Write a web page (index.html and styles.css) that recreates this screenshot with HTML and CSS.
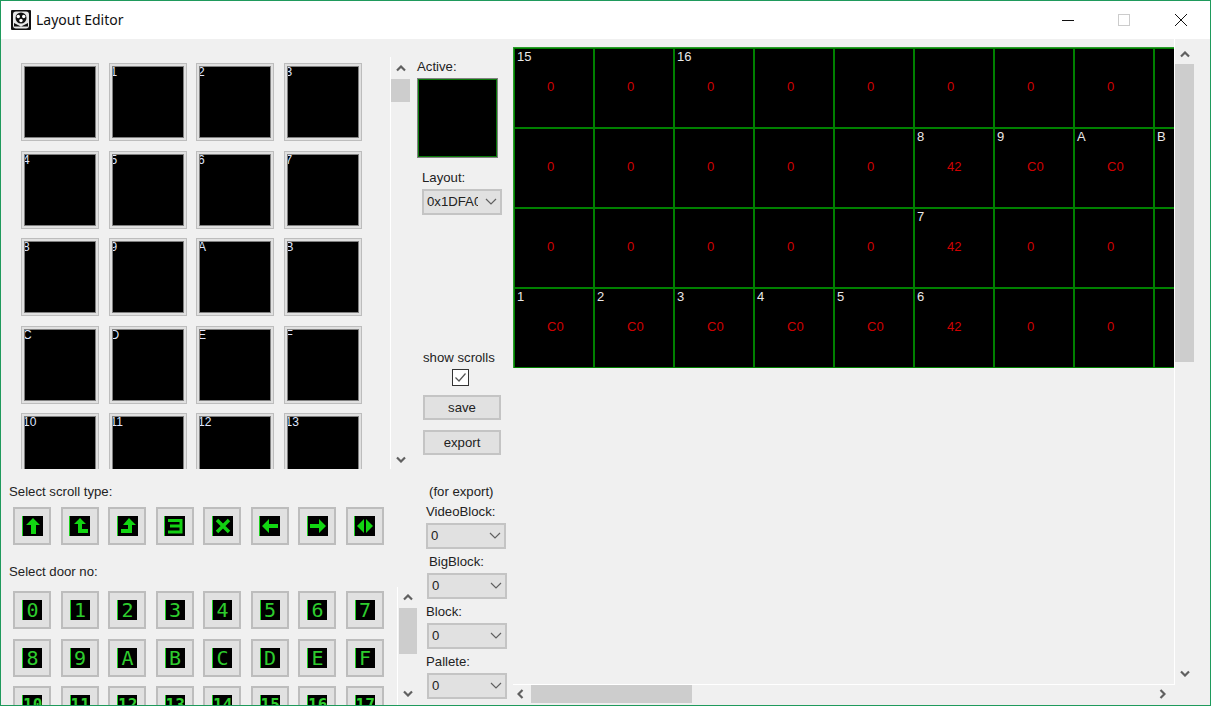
FILE: index.html
```html
<!DOCTYPE html>
<html lang="en">
<head>
  <meta charset="UTF-8">
  <title>Layout Editor</title>
  <link rel="stylesheet" href="styles.css">
</head>
<body>

  <svg class="defs" width="0" height="0">
    <symbol id="up" viewBox="0 0 10 7"><polyline points="1,5.5 5,1.5 9,5.5" fill="none" stroke="#606060" stroke-width="2.2"/></symbol>
    <symbol id="down" viewBox="0 0 10 7"><polyline points="1,1.5 5,5.5 9,1.5" fill="none" stroke="#606060" stroke-width="2.2"/></symbol>
    <symbol id="left" viewBox="0 0 7 10"><polyline points="5.5,1 1.5,5 5.5,9" fill="none" stroke="#606060" stroke-width="2.2"/></symbol>
    <symbol id="right" viewBox="0 0 7 10"><polyline points="1.5,1 5.5,5 1.5,9" fill="none" stroke="#606060" stroke-width="2.2"/></symbol>
    <symbol id="caret" viewBox="0 0 12 7"><polyline points="1,1 6,6 11,1" fill="none" stroke="#606060" stroke-width="1.2"/></symbol>
  </svg>

  <div class="window">

    <div class="titlebar">
      <svg class="app-icon" viewBox="0 0 20 20">
        <rect width="20" height="20" rx="1" fill="#111"/>
        <rect x="2" y="1.5" width="16" height="17" rx="3" fill="#e8e8e8"/>
        <circle cx="10" cy="8" r="5.5" fill="#111"/>
        <circle cx="7.3" cy="6.5" r="1.7" fill="#fff"/>
        <circle cx="12.7" cy="6.5" r="1.7" fill="#fff"/>
        <circle cx="10" cy="10.5" r="1.7" fill="#fff"/>
        <path d="M3 13l7 3.5 7-3.5v3.5H3z" fill="#111"/>
      </svg>
      <span class="title">Layout Editor</span>
      <div class="win-buttons">
        <span class="win-min"></span>
        <span class="win-max"></span>
        <svg class="win-close" viewBox="0 0 12 12"><path d="M0 0L12 12M12 0L0 12" stroke="#111" stroke-width="1" fill="none"/></svg>
      </div>
    </div>

    <div class="content">

      <div class="left-col">
        <div class="tile-panel">
          <div class="tile-grid">
            <div class="tile"><div class="tile-face"></div></div>
            <div class="tile"><div class="tile-face">1</div></div>
            <div class="tile"><div class="tile-face">2</div></div>
            <div class="tile"><div class="tile-face">3</div></div>
            <div class="tile"><div class="tile-face">4</div></div>
            <div class="tile"><div class="tile-face">5</div></div>
            <div class="tile"><div class="tile-face">6</div></div>
            <div class="tile"><div class="tile-face">7</div></div>
            <div class="tile"><div class="tile-face">8</div></div>
            <div class="tile"><div class="tile-face">9</div></div>
            <div class="tile"><div class="tile-face">A</div></div>
            <div class="tile"><div class="tile-face">B</div></div>
            <div class="tile"><div class="tile-face">C</div></div>
            <div class="tile"><div class="tile-face">D</div></div>
            <div class="tile"><div class="tile-face">E</div></div>
            <div class="tile"><div class="tile-face">F</div></div>
            <div class="tile"><div class="tile-face">10</div></div>
            <div class="tile"><div class="tile-face">11</div></div>
            <div class="tile"><div class="tile-face">12</div></div>
            <div class="tile"><div class="tile-face">13</div></div>
          </div>
          <div class="vscroll tile-scroll">
            <div class="arrow arrow-tall"><svg class="chev"><use href="#up"/></svg></div>
            <div class="thumb thumb-tiles"></div>
            <div class="arrow arrow-end"><svg class="chev"><use href="#down"/></svg></div>
          </div>
        </div>

        <div class="label scroll-label">Select scroll type:</div>
        <div class="btn-row">
          <div class="pick"><svg class="pick-img" viewBox="0 0 20 20"><polygon points="10,2 17,9 13,9 13,18 8,18 8,9 3,9"/></svg></div>
          <div class="pick"><svg class="pick-img" viewBox="0 0 20 20"><polygon points="10,2 16,8 12,8 12,13 18,13 18,17 8,17 8,8 4,8"/></svg></div>
          <div class="pick"><svg class="pick-img" viewBox="0 0 20 20"><polygon points="11,2 18,9 14,9 14,17 3,17 3,13 10,13 10,9 5,9"/></svg></div>
          <div class="pick"><svg class="pick-img" viewBox="0 0 20 20"><path class="line" d="M3 4.5H16V16H3M5 10H16"/></svg></div>
          <div class="pick"><svg class="pick-img" viewBox="0 0 20 20"><path class="line line-x" d="M4 4L16 16M16 4L4 16"/></svg></div>
          <div class="pick"><svg class="pick-img" viewBox="0 0 20 20"><polygon points="2,10 9,3 9,8 18,8 18,12 9,12 9,17"/></svg></div>
          <div class="pick"><svg class="pick-img" viewBox="0 0 20 20"><polygon points="18,10 11,3 11,8 2,8 2,12 11,12 11,17"/></svg></div>
          <div class="pick"><svg class="pick-img" viewBox="0 0 20 20"><polygon points="2,10 9,3 9,17"/><polygon points="18,10 11,3 11,17"/></svg></div>
        </div>

        <div class="label door-label">Select door no:</div>
        <div class="door-panel">
          <div class="door-grid">
            <div class="pick"><span class="pick-num">0</span></div>
            <div class="pick"><span class="pick-num">1</span></div>
            <div class="pick"><span class="pick-num">2</span></div>
            <div class="pick"><span class="pick-num">3</span></div>
            <div class="pick"><span class="pick-num">4</span></div>
            <div class="pick"><span class="pick-num">5</span></div>
            <div class="pick"><span class="pick-num">6</span></div>
            <div class="pick"><span class="pick-num">7</span></div>
            <div class="pick"><span class="pick-num">8</span></div>
            <div class="pick"><span class="pick-num">9</span></div>
            <div class="pick"><span class="pick-num">A</span></div>
            <div class="pick"><span class="pick-num">B</span></div>
            <div class="pick"><span class="pick-num">C</span></div>
            <div class="pick"><span class="pick-num">D</span></div>
            <div class="pick"><span class="pick-num">E</span></div>
            <div class="pick"><span class="pick-num">F</span></div>
            <div class="pick"><span class="pick-num pick-num-wide">10</span></div>
            <div class="pick"><span class="pick-num pick-num-wide">11</span></div>
            <div class="pick"><span class="pick-num pick-num-wide">12</span></div>
            <div class="pick"><span class="pick-num pick-num-wide">13</span></div>
            <div class="pick"><span class="pick-num pick-num-wide">14</span></div>
            <div class="pick"><span class="pick-num pick-num-wide">15</span></div>
            <div class="pick"><span class="pick-num pick-num-wide">16</span></div>
            <div class="pick"><span class="pick-num pick-num-wide">17</span></div>
          </div>
          <div class="vscroll door-scroll">
            <div class="arrow arrow-door"><svg class="chev"><use href="#up"/></svg></div>
            <div class="thumb thumb-door"></div>
            <div class="arrow arrow-end"><svg class="chev"><use href="#down"/></svg></div>
          </div>
        </div>
      </div>

      <div class="mid-col">
        <div class="label active-label">Active:</div>
        <div class="active-box"></div>
        <div class="label layout-label">Layout:</div>
        <div class="combo layout-combo"><span class="combo-text">0x1DFA00</span><svg class="caret"><use href="#caret"/></svg></div>
        <div class="label show-label">show scrolls</div>
        <div class="check">
          <svg viewBox="0 0 15 15"><polyline points="2.5,7.5 6,11 12.5,3.5" fill="none" stroke="#555" stroke-width="1.2"/></svg>
        </div>
        <div class="btn save-btn">save</div>
        <div class="btn export-btn">export</div>
        <div class="label note-label">(for export)</div>
        <div class="label video-label">VideoBlock:</div>
        <div class="combo video-combo"><span class="combo-text">0</span><svg class="caret"><use href="#caret"/></svg></div>
        <div class="label big-label">BigBlock:</div>
        <div class="combo plain-combo"><span class="combo-text">0</span><svg class="caret"><use href="#caret"/></svg></div>
        <div class="label block-label">Block:</div>
        <div class="combo plain-combo"><span class="combo-text">0</span><svg class="caret"><use href="#caret"/></svg></div>
        <div class="label block-label">Pallete:</div>
        <div class="combo plain-combo"><span class="combo-text">0</span><svg class="caret"><use href="#caret"/></svg></div>
      </div>

      <div class="right-col">
        <div class="map-view">
          <div class="map-grid">
            <div class="cell"><span class="cell-id">15</span><span class="cell-val">0</span></div>
            <div class="cell"><span class="cell-val">0</span></div>
            <div class="cell"><span class="cell-id">16</span><span class="cell-val">0</span></div>
            <div class="cell"><span class="cell-val">0</span></div>
            <div class="cell"><span class="cell-val">0</span></div>
            <div class="cell"><span class="cell-val">0</span></div>
            <div class="cell"><span class="cell-val">0</span></div>
            <div class="cell"><span class="cell-val">0</span></div>
            <div class="cell"></div>

            <div class="cell"><span class="cell-val">0</span></div>
            <div class="cell"><span class="cell-val">0</span></div>
            <div class="cell"><span class="cell-val">0</span></div>
            <div class="cell"><span class="cell-val">0</span></div>
            <div class="cell"><span class="cell-val">0</span></div>
            <div class="cell"><span class="cell-id">8</span><span class="cell-val">42</span></div>
            <div class="cell"><span class="cell-id">9</span><span class="cell-val">C0</span></div>
            <div class="cell"><span class="cell-id">A</span><span class="cell-val">C0</span></div>
            <div class="cell"><span class="cell-id">B</span></div>

            <div class="cell"><span class="cell-val">0</span></div>
            <div class="cell"><span class="cell-val">0</span></div>
            <div class="cell"><span class="cell-val">0</span></div>
            <div class="cell"><span class="cell-val">0</span></div>
            <div class="cell"><span class="cell-val">0</span></div>
            <div class="cell"><span class="cell-id">7</span><span class="cell-val">42</span></div>
            <div class="cell"><span class="cell-val">0</span></div>
            <div class="cell"><span class="cell-val">0</span></div>
            <div class="cell"></div>

            <div class="cell"><span class="cell-id">1</span><span class="cell-val">C0</span></div>
            <div class="cell"><span class="cell-id">2</span><span class="cell-val">C0</span></div>
            <div class="cell"><span class="cell-id">3</span><span class="cell-val">C0</span></div>
            <div class="cell"><span class="cell-id">4</span><span class="cell-val">C0</span></div>
            <div class="cell"><span class="cell-id">5</span><span class="cell-val">C0</span></div>
            <div class="cell"><span class="cell-id">6</span><span class="cell-val">42</span></div>
            <div class="cell"><span class="cell-val">0</span></div>
            <div class="cell"><span class="cell-val">0</span></div>
            <div class="cell"></div>
          </div>
        </div>
        <div class="vscroll map-vscroll">
          <div class="arrow arrow-map"><svg class="chev"><use href="#up"/></svg></div>
          <div class="thumb thumb-map"></div>
          <div class="arrow arrow-end"><svg class="chev"><use href="#down"/></svg></div>
        </div>
        <div class="hscroll">
          <div class="arrow-h"><svg class="chev-h"><use href="#left"/></svg></div>
          <div class="thumb thumb-h"></div>
          <div class="arrow-h arrow-h-end"><svg class="chev-h"><use href="#right"/></svg></div>
        </div>
      </div>

    </div>
  </div>

</body>
</html>
```

FILE: styles.css
```css
body {
  margin: 0;
  font-family: "Liberation Sans", Arial, sans-serif;
  font-size: 13.2px;
  color: #222;
}

.defs {
  position: absolute;
}

.window {
  box-sizing: border-box;
  width: 1211px;
  height: 706px;
  border: 1px solid #1f9a5c;
  display: flex;
  flex-direction: column;
  overflow: hidden;
  background-color: #f0f0f0;
}

/* title bar */
.titlebar {
  flex: none;
  height: 38px;
  background-color: #fff;
  display: flex;
  align-items: center;
}

.app-icon {
  width: 20px;
  height: 20px;
  margin-left: 10px;
}

.title {
  margin: 0 0 2px 5px;
  font-family: "Noto Sans", sans-serif;
  font-size: 14px;
  color: #111;
}

.win-buttons {
  margin-left: auto;
  display: flex;
  align-items: center;
}

.win-min {
  width: 12px;
  height: 1px;
  background-color: #111;
  margin-right: 44px;
}

.win-max {
  box-sizing: border-box;
  width: 12px;
  height: 12px;
  border: 1px solid #ccc;
  margin-right: 45px;
}

.win-close {
  width: 12px;
  height: 12px;
  margin-right: 23px;
}

.content {
  flex: 1;
  display: flex;
  min-height: 0;
}

/* left column */
.left-col {
  flex: none;
  width: 416px;
  display: flex;
  flex-direction: column;
}

.label {
  height: 14px;
  line-height: 16px;
  white-space: nowrap;
}

.tile-panel {
  flex: none;
  height: 412px;
  margin-top: 18px;
  display: flex;
  overflow: hidden;
}

.tile-grid {
  box-sizing: border-box;
  width: 389px;
  height: 412px;
  padding: 6px 0 0 20px;
  display: grid;
  grid-template-columns: repeat(4, 78px);
  grid-auto-rows: 78px;
  gap: 9.5px;
  overflow: hidden;
}

.tile {
  box-sizing: border-box;
  border: 1px solid #bdbdbd;
  background-color: #e0e0e0;
  padding: 2px;
}

/* the ids start under the frame, so their left edge is cut */
.tile-face {
  box-sizing: border-box;
  height: 100%;
  border: 1px solid #808080;
  background-color: #000;
  overflow: hidden;
  text-indent: -2px;
  font-size: 12px;
  line-height: 11px;
  color: #dfe6ff;
}

.vscroll {
  display: flex;
  flex-direction: column;
  align-items: flex-start;
  border-left: 1px solid #fff;
}

.tile-scroll {
  width: 19px;
}

.arrow {
  flex: none;
  width: 19px;
  height: 20px;
  display: flex;
  align-items: center;
  justify-content: center;
}

.arrow-tall {
  height: 22px;
}

.arrow-door {
  height: 21px;
}

.arrow-map {
  height: 20px;
  margin-top: 5px;
}

.arrow-end {
  margin-top: auto;
}

.chev {
  width: 10px;
  height: 7px;
}

.thumb {
  flex: none;
  background-color: #cdcdcd;
}

.thumb-tiles {
  width: 19px;
  height: 23px;
}

.thumb-door {
  width: 18px;
  height: 46px;
  margin-left: 1px;
}

.thumb-map {
  width: 19px;
  height: 298px;
}

.scroll-label {
  margin: 15px 0 9px 8px;
}

.btn-row,
.door-grid {
  display: grid;
  grid-template-columns: repeat(8, 38px);
  grid-auto-rows: 38px;
  gap: 9.5px;
  padding-left: 12px;
}

.pick {
  box-sizing: border-box;
  border: 2px solid #bdbdbd;
  background-color: #e1e1e1;
  display: flex;
  align-items: center;
  justify-content: center;
}

.pick-img {
  width: 20px;
  height: 20px;
  background-color: #000;
  border-left: 1px solid #1fd01f;
  fill: #12d612;
}

.line {
  fill: none;
  stroke: #12d012;
  stroke-width: 3;
}

.line-x {
  stroke-width: 3.5;
}

.pick-num {
  box-sizing: border-box;
  width: 20px;
  height: 20px;
  background-color: #000;
  border-left: 1px solid #1fd01f;
  overflow: hidden;
  text-align: center;
  font-family: "DejaVu Sans Mono", monospace;
  font-size: 20px;
  line-height: 20px;
  color: #2ecc2e;
  white-space: nowrap;
}

.pick-num-wide {
  font-size: 16px;
  font-weight: bold;
}

.door-label {
  margin: 19px 0 9px 8px;
}

.door-panel {
  flex: 1;
  min-height: 0;
  display: flex;
  overflow: hidden;
}

.door-grid {
  box-sizing: border-box;
  width: 396px;
  padding-top: 4px;
  overflow: hidden;
}

.door-scroll {
  width: 19px;
  padding-bottom: 2px;
}

/* middle column */
.mid-col {
  flex: none;
  width: 96px;
  display: flex;
  flex-direction: column;
  align-items: flex-start;
}

.active-label {
  margin-top: 20px;
}

.active-box {
  box-sizing: border-box;
  width: 81px;
  height: 80px;
  margin-top: 5px;
  background-color: #000;
  border: 1px solid #808080;
  box-shadow: inset 0 0 0 1px #0a7a0a;
}

.layout-label {
  margin: 12px 0 0 5px;
}

.combo {
  box-sizing: border-box;
  flex: none;
  width: 80px;
  height: 26px;
  margin-top: 5px;
  padding: 0 3px 2px 3px;
  border: 2px solid #c4c4c4;
  background-color: #e1e1e1;
  display: flex;
  align-items: center;
  justify-content: space-between;
}

.combo-text {
  width: 51px;
  overflow: hidden;
  white-space: nowrap;
}

.caret {
  width: 12px;
  height: 7px;
}

.layout-combo {
  margin-left: 5px;
}

.video-combo {
  margin-left: 9px;
}

.plain-combo {
  margin-left: 10px;
}

.show-label {
  margin: 135px 0 0 6px;
}

.check {
  box-sizing: border-box;
  width: 17px;
  height: 17px;
  margin: 5px 0 0 35px;
  border: 1px solid #333;
  background-color: #fff;
  line-height: 0;
}

.btn {
  box-sizing: border-box;
  width: 78px;
  height: 25px;
  margin-left: 6px;
  border: 2px solid #c4c4c4;
  background-color: #e1e1e1;
  text-align: center;
  line-height: 21px;
}

.save-btn {
  margin-top: 9px;
}

.export-btn {
  margin-top: 10px;
}

.note-label {
  margin: 29px 0 0 12px;
}

.video-label {
  margin: 6px 0 0 9px;
}

.big-label {
  margin: 5px 0 0 12px;
}

.block-label {
  margin: 5px 0 0 9px;
}

/* map on the right */
.right-col {
  flex: 1;
  min-width: 0;
  display: grid;
  grid-template-columns: 662px 20px;
  grid-template-rows: 646px 20px;
}

.map-view {
  box-sizing: border-box;
  padding-top: 8px;
  border-right: 1px solid #fff;
  border-bottom: 1px solid #fff;
  overflow: hidden;
}

.map-grid {
  display: grid;
  grid-template-columns: repeat(9, 80px);
  grid-auto-rows: 80px;
  width: max-content;
  border-left: 1px solid #2c9a2c;
  border-top: 1px solid #2c9a2c;
}

.cell {
  box-sizing: border-box;
  border: 1px solid #008000;
  background-color: #000;
  padding: 1px 2px;
  display: grid;
  grid-template-rows: 14px 14px;
  row-gap: 16px;
  line-height: 14px;
  font-size: 13px;
}

.cell-id {
  grid-row: 1;
  color: #e8e8e8;
}

.cell-val {
  grid-row: 2;
  margin-left: 30px;
  color: #d00000;
}

.map-vscroll {
  border-left: none;
  padding-bottom: 2px;
}

.hscroll {
  display: flex;
  align-items: stretch;
  height: 18px;
}

.arrow-h {
  flex: none;
  width: 15px;
  margin-right: 3px;
  display: flex;
  align-items: center;
  justify-content: center;
}

.arrow-h-end {
  width: 17px;
  margin-left: auto;
  margin-right: 4px;
}

.chev-h {
  width: 7px;
  height: 10px;
}

.thumb-h {
  width: 161px;
}
```
